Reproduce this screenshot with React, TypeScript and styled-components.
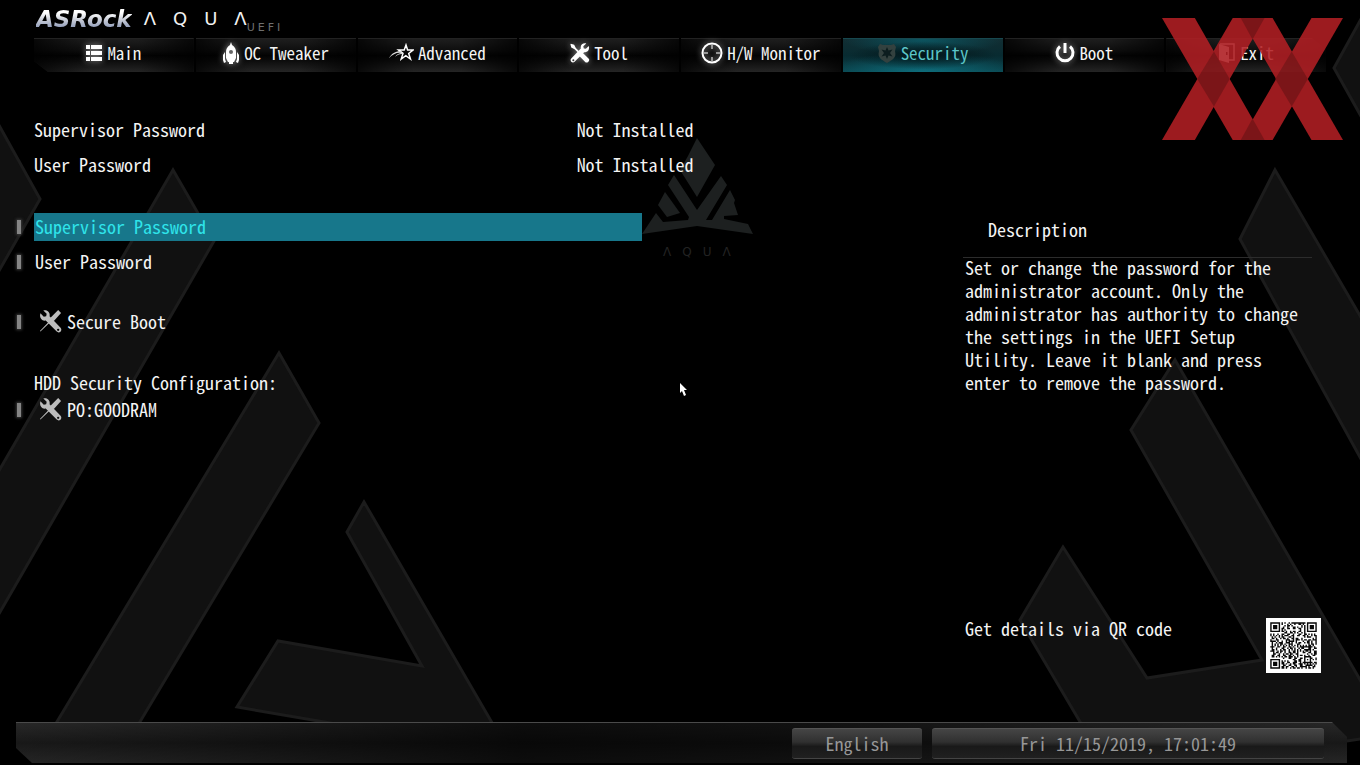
import React from "react";
import styled, { createGlobalStyle, css } from "styled-components";

const GlobalStyle = createGlobalStyle`
  *, *::before, *::after { box-sizing: border-box; }
  html, body { margin: 0; background: #000; }
  body, button {
    font-family: "Noto Sans Mono CJK JP", "Noto Sans Mono CJK SC", "Noto Sans CJK JP", "Liberation Mono", monospace;
    font-feature-settings: "hwid";
    font-size: 18px;
    line-height: 24px;
    color: #f4f4f4;
  }
`;

const Screen = styled.div`
  position: relative;
  isolation: isolate;
  display: flex;
  flex-direction: column;
  min-height: 100vh;
  overflow: hidden;
  background: #000;
`;

const Backdrop = styled.svg`
  position: absolute;
  inset: 0;
  width: 100%;
  height: 100%;
  z-index: -1;
`;

const BrandRow = styled.header`
  display: flex;
  align-items: center;
  height: 38px;
  padding: 0 36px;
`;

const BrandName = styled.span`
  font: italic bold 23px/30px "DejaVu Sans", sans-serif;
  background: linear-gradient(#ffffff 30%, #c3c8d4 55%, #8492b4 85%);
  background-clip: text;
  -webkit-background-clip: text;
  color: transparent;
`;

const Series = styled.span`
  display: flex;
  gap: 17px;
  margin-left: 12px;
  font: 400 18px/30px "DejaVu Sans", sans-serif;
  color: #f2f2f2;
`;

const Firmware = styled.span`
  display: flex;
  align-self: flex-end;
  gap: 3px;
  font: 400 11px/20px "DejaVu Sans", sans-serif;
  color: #6f6f6f;
`;

const TabBar = styled.nav`
  display: grid;
  grid-template-columns: repeat(8, 1fr);
  gap: 2px;
  margin: 0 34px;
`;

const Tab = styled.a<{ $active?: boolean; $edge?: "left" | "right" }>`
  display: flex;
  align-items: center;
  justify-content: center;
  gap: 4px;
  height: 34px;
  padding-bottom: 5px;
  border-top: 1px solid #222;
  font-size: 17px;
  color: #f4f4f4;
  text-decoration: none;
  background:
    linear-gradient(90deg, rgba(0,0,0,.75), transparent 35%, transparent 65%, rgba(0,0,0,.75)),
    linear-gradient(#1e1e1e, #0e0e0e 35%, #030303 50%, #0c0c0c 65%, #252525);
  ${p => p.$edge === "left" && css`clip-path: polygon(0 0, 100% 0, 100% 100%, 14px 100%, 0 23px);`}
  ${p => p.$edge === "right" && css`clip-path: polygon(0 0, calc(100% - 14px) 0, 100% 12px, 100% 100%, 0 100%);`}
  ${p => p.$active && css`
    border-color: #17484f;
    color: #5cc6c8;
    background:
      radial-gradient(ellipse 46% 42% at center, rgba(0,14,17,.85), transparent),
      radial-gradient(ellipse 60% 60% at 50% 100%, rgba(15,125,142,.7), transparent),
      radial-gradient(ellipse 50% 50% at 50% 0, rgba(10,95,108,.8), transparent),
      linear-gradient(#122e33, #082b31 50%, #0b454e);
  `}
`;

const Glyph = styled.svg<{ $glow?: boolean }>`
  flex: none;
  ${p => p.$glow && css`filter: drop-shadow(0 0 3px rgba(255,255,255,.55));`}
`;

const Main = styled.main`
  flex: 1;
  display: flex;
  flex-direction: column;
  padding: 40px 34px 49px 14px;
`;

const StatusList = styled.dl`
  margin: 0 0 31px;
  padding-left: 20px;
`;

const StatusRow = styled.div`
  display: grid;
  grid-template-columns: 42% 1fr;
  line-height: 35px;
  dd { margin: 0; }
`;

const Columns = styled.div`
  flex: 1;
  display: flex;
  justify-content: space-between;
`;

const Menu = styled.section`
  flex: 0 0 calc(48% - 2px);
  display: flex;
  flex-direction: column;
`;

const MenuGroup = styled.div`
  display: flex;
  flex-direction: column;
  gap: 7px;
  margin-bottom: 32px;
`;

const MenuItem = styled.button`
  display: flex;
  align-items: stretch;
  height: 28px;
  padding: 0;
  border: 0;
  background: none;
  text-align: left;
  cursor: default;
`;

const Marker = styled.span`
  display: flex;
  align-items: center;
  flex: 0 0 20px;
  &::before {
    content: "";
    width: 4px;
    height: 14px;
    margin-left: 3px;
    background: #858585;
    box-shadow: 0 0 3px 1px #3c3c3c;
  }
`;

const Label = styled.span<{ $selected?: boolean; $icon?: boolean }>`
  flex: 1;
  display: flex;
  align-items: center;
  gap: 5px;
  padding: 0 0 2px ${p => (p.$icon ? 5 : 1)}px;
  color: ${p => (p.$selected ? "#2fe4ea" : "#f4f4f4")};
  background: ${p => (p.$selected ? "#17778b" : "transparent")};
`;

const GroupTitle = styled.h2`
  margin: 0;
  padding-left: 20px;
  font-size: 18px;
  font-weight: 400;
  line-height: 28px;
`;

const DriveGroup = styled.div`
  display: flex;
  flex-direction: column;
`;

const Aside = styled.aside`
  flex: 0 0 363px;
  display: flex;
  flex-direction: column;
`;

const AsideTitle = styled.h2`
  margin: 0 14px 0 0;
  padding: 4px 25px 16px;
  border-bottom: 1px solid #2c2c2c;
  font-size: 18px;
  font-weight: 400;
  line-height: 24px;
`;

const Description = styled.p`
  margin: -2px 0 0;
  padding: 0 16px 0 2px;
  line-height: 23px;
`;

const QrRow = styled.div`
  display: flex;
  justify-content: space-between;
  margin: auto 5px 0 2px;
  line-height: 20px;
`;

const QrImage = styled.svg`
  display: block;
  width: 55px;
  height: 55px;
`;

const Footer = styled.footer`
  display: flex;
  justify-content: flex-end;
  gap: 10px;
  height: 41px;
  margin: 0 13px 2px 16px;
  padding: 5px 23px 4px;
  border-top: 1px solid #4a4a4a;
  background:
    linear-gradient(90deg, rgba(0,0,0,.1), rgba(0,0,0,.7) 38%, rgba(0,0,0,.6) 60%, rgba(0,0,0,.1)),
    linear-gradient(#2c2c2c, #1b1b1b 50%, #2a2a2a);
  clip-path: polygon(0 0, calc(100% - 15px) 0, 100% 15px, 100% 100%, 16px 100%, 0 26px);
`;

const panel = css`
  border: 0;
  border-top: 1px solid #555;
  border-bottom: 1px solid #444;
  border-radius: 3px;
  background: linear-gradient(#454545, #303030 45%, #191919 60%, #202020);
  color: #979797;
  line-height: 28px;
  text-align: center;
`;

const LanguageButton = styled.button`
  ${panel}
  width: 130px;
  padding: 0 0 2px;
`;

const Clock = styled.time`
  ${panel}
  flex: 0 0 392px;
`;

const Watermark = styled.svg`
  position: absolute;
  top: 18px;
  right: 17px;
  width: 181px;
  height: 122px;
  opacity: 0.88;
  pointer-events: none;
`;

const Pointer = styled.svg`
  position: absolute;
  left: 50%;
  top: 50%;
  pointer-events: none;
`;

const Caption = styled.div`
  position: absolute;
  left: 50%;
  top: 244px;
  display: flex;
  gap: 11px;
  margin-left: -17px;
  font: 400 12px/16px "DejaVu Sans", sans-serif;
  color: #232323;
`;

function ListMark() {
  return (
    <Glyph $glow width="17" height="16" viewBox="0 0 17 16" fill="#fff" aria-hidden>
      <path d="M0 0h4v4H0zM5 0h11v4H5zM0 6h4v4H0zM5 6h11v4H5zM0 12h4v4H0zM5 12h11v4H5z" />
    </Glyph>
  );
}

function Rocket() {
  return (
    <Glyph $glow width="18" height="22" viewBox="0 0 18 22" fill="#fff" aria-hidden>
      <path fillRule="evenodd" d="M9 0l1 3c3 2 4 4 4 7v6l-2 4H6l-2-4v-6c0-3 1-5 4-7zM9 8a2 2 0 100 4 2 2 0 000-4z" />
      <path d="M3 10v7l1 3-2 1-1-3v-5zM15 10v7l-1 3 2 1 1-3v-5z" />
      <path d="M7 20h4v2H7z" />
    </Glyph>
  );
}

function ShootingStar() {
  return (
    <Glyph width="25" height="20" viewBox="0 0 25 20" fill="none" stroke="#fff" aria-hidden>
      <path strokeWidth="1.5" d="M17 2l1.6 5H24l-4.3 3.5 1.8 5.5-4.7-3.3-4.6 3.3 1.8-5.6L9.500 7h5.700z" />
      <path fill="#ddd" stroke="none" d="M0 15c3-5 7-7 12-7l1 2C8 9 4 11 0 15zM6 14c2-3 4-4 7-4v1c-3 0-5 1-7 3z" />
    </Glyph>
  );
}

function CrossedTools({ color, flip, glow }: { color: string; flip?: boolean; glow?: boolean }) {
  return (
    <Glyph $glow={glow} width={flip ? 23 : 20} height={flip ? 23 : 20} viewBox="0 0 24 24" aria-hidden>
      <g transform={flip ? "matrix(-1 0 0 1 24 0)" : undefined} fill={color}>
        {flip ? (
          <path d="M1 3l3-3 8 8-.5 2 11.500 12-.5.5-12-11.500-2 .5z" />
        ) : (
          <path d="M1 1l4 1 2 4 6 6-1.500 1.500-6-6-4-2-1-4zM11.500 13.500l2-2 2 .5 7 7c2 2-2 6-4 4l-7-7z" />
        )}
        <path
          fillRule="evenodd"
          d="M22.500 3.500l-3.500 3.500-2.500-.5-.5-2.500L19.500.5C16-.5 12 2 13 6.500l-11.500 12c-2.500 3 1.500 6.500 4 4L17 11c4 1 7-3 5.500-7.500zM4 19.500a1.200 1.200 0 110 2.400 1.200 1.200 0 010-2.400z"
        />
      </g>
    </Glyph>
  );
}

function Crosshair() {
  return (
    <Glyph $glow width="22" height="22" viewBox="0 0 22 22" fill="none" stroke="#fff" aria-hidden>
      <circle cx="11" cy="11" r="9.500" strokeWidth="2" />
      <path stroke="#bbb" strokeWidth="1.500" d="M11 2v5M11 15v5M2 11h5M15 11h5" />
    </Glyph>
  );
}

function Badge() {
  return (
    <Glyph width="20" height="20" viewBox="0 0 20 20" aria-hidden>
      <path fill="#33413f" d="M3 1l3 1h8l3-1 2 3-1 4c2 7-3 9-8 12C5 17 0 15 2 8L1 4z" />
      <path fill="#0c1d1f" d="M10 4l1.500 3.500 4-1-2.500 3.500 2.500 3.500-4-1L10 16l-1.500-3.500-4 1L7 10 4.500 6.500l4 1z" />
    </Glyph>
  );
}

function PowerMark() {
  return (
    <Glyph $glow width="20" height="20" viewBox="0 0 20 20" fill="none" stroke="#fff" strokeWidth="3" aria-hidden>
      <path d="M5 3.500a8 8 0 1010 0M10 0v10" />
    </Glyph>
  );
}

function Door() {
  return (
    <Glyph width="18" height="20" viewBox="0 0 18 20" aria-hidden>
      <path fill="none" stroke="#ddd" strokeWidth="1.500" d="M2 1h14v16h-5" />
      <path fill="#ddd" fillRule="evenodd" d="M1 1l10 3v16L1 17zM8 9v3h1.500V9z" />
    </Glyph>
  );
}

const MODULES = 33;

function inFinder(x: number, y: number) {
  return (x < 8 && y < 8) || (x > 24 && y < 8) || (x < 8 && y > 24);
}

function qrPath() {
  let d = "";
  let seed = 7351;
  for (let y = 0; y < MODULES; y++) {
    for (let x = 0; x < MODULES; x++) {
      seed = (seed * 1103515245 + 12345) % 2147483648;
      const align = Math.max(Math.abs(x - 26), Math.abs(y - 26));
      const dark = align < 3 ? align !== 1 : (seed >> 12) % 2 === 0;
      if (dark && !inFinder(x, y)) d += `M${x} ${y}h1v1h-1z`;
    }
  }
  return d;
}

function QrCode() {
  return (
    <QrImage viewBox="-3 -3 39 39" role="img" aria-label="QR code">
      <path fill="#fff" d="M-3-3h39v39h-39z" />
      <path fill="#080808" d={qrPath()} />
      {[[0, 0], [26, 0], [0, 26]].map(([x, y]) => (
        <path
          key={`${x}-${y}`}
          fill="#080808"
          fillRule="evenodd"
          d={`M${x} ${y}h7v7h-7zM${x + 1} ${y + 1}v5h5v-5zM${x + 2} ${y + 2}h3v3h-3z`}
        />
      ))}
    </QrImage>
  );
}

function Scenery() {
  return (
    <Backdrop viewBox="0 0 1360 765" preserveAspectRatio="xMidYMid slice" aria-hidden>
      <g fill="#111" stroke="#1c1c1c" strokeWidth="3">
        <path d="M-4 120L40 199-4 276z" />
        <path d="M173 170L214 241-4 619V476z" />
        <path d="M279 353L319 423 129 740H46z" />
        <path d="M364 502L502 740H430L237 707 278 641 422 666 347 532z" />
        <path d="M1366 10L1334 68 1366 125z" />
        <path d="M1275 170L1366 326V468L1240 239z" />
        <path d="M1175 360L1366 690V738L1340 742H1092L1020 620 1063 547 1147 678 1262 660 1131 430z" />
      </g>
      <g transform="translate(640 135)" fill="#1d2020">
        <path d="M57 3L75 30 57 62 40 35 48 21z" />
        <path d="M34 40L57 75 81 41 87 50 66 85H72L90 55 95 65 94 68 98 80 84 81V84L108 89 113 99 57 91 2 99 16 78 23 87 48 85 49 82 28 50z" />
        <path d="M25 57L40 78 27 82 18 70z" />
      </g>
    </Backdrop>
  );
}

const tabs: { name: string; icon: React.ReactNode; active?: boolean }[] = [
  { name: "Main", icon: <ListMark /> },
  { name: "OC Tweaker", icon: <Rocket /> },
  { name: "Advanced", icon: <ShootingStar /> },
  { name: "Tool", icon: <CrossedTools color="#fff" glow /> },
  { name: "H/W Monitor", icon: <Crosshair /> },
  { name: "Security", icon: <Badge />, active: true },
  { name: "Boot", icon: <PowerMark /> },
  { name: "Exit", icon: <Door /> },
];

export default function App() {
  return (
    <Screen>
      <GlobalStyle />
      <Scenery />
      <Caption aria-hidden>
        <span>Λ</span><span>Q</span><span>U</span><span>Λ</span>
      </Caption>
      <BrandRow>
        <BrandName>ASRock</BrandName>
        <Series><span>Λ</span><span>Q</span><span>U</span><span>Λ</span></Series>
        <Firmware><span>U</span><span>E</span><span>F</span><span>I</span></Firmware>
      </BrandRow>
      <TabBar>
        {tabs.map((tab, i) => (
          <Tab
            key={tab.name}
            href="#"
            $active={tab.active}
            $edge={i === 0 ? "left" : i === tabs.length - 1 ? "right" : undefined}
            aria-current={tab.active ? "page" : undefined}
          >
            {tab.icon}
            {tab.name}
          </Tab>
        ))}
      </TabBar>
      <Main>
        <StatusList>
          <StatusRow><dt>Supervisor Password</dt><dd>Not Installed</dd></StatusRow>
          <StatusRow><dt>User Password</dt><dd>Not Installed</dd></StatusRow>
        </StatusList>
        <Columns>
          <Menu>
            <MenuGroup>
              <MenuItem><Marker /><Label $selected>Supervisor Password</Label></MenuItem>
              <MenuItem><Marker /><Label>User Password</Label></MenuItem>
            </MenuGroup>
            <MenuGroup>
              <MenuItem><Marker /><Label $icon><CrossedTools color="#bdbdbd" flip />Secure Boot</Label></MenuItem>
            </MenuGroup>
            <DriveGroup>
              <GroupTitle>HDD Security Configuration:</GroupTitle>
              <MenuItem><Marker /><Label $icon><CrossedTools color="#bdbdbd" flip />PO:GOODRAM</Label></MenuItem>
            </DriveGroup>
          </Menu>
          <Aside>
            <AsideTitle>Description</AsideTitle>
            <Description>
              Set or change the password for the administrator account. Only the administrator has
              authority to change the settings in the UEFI Setup Utility. Leave it blank and press
              enter to remove the password.
            </Description>
            <QrRow>
              <span>Get details via QR code</span>
              <QrCode />
            </QrRow>
          </Aside>
        </Columns>
      </Main>
      <Footer>
        <LanguageButton>English</LanguageButton>
        <Clock dateTime="2019-11-15T17:01:49">Fri 11/15/2019, 17:01:49</Clock>
      </Footer>
      <Watermark viewBox="0 0 540 364" preserveAspectRatio="none" aria-hidden>
        <g fill="#b21f24">
          <path d="M0 0H98L306 364H211z" />
          <path d="M211 0H306L98 364H0z" />
          <path d="M235 0H330L540 364H446z" />
          <path d="M446 0H540L330 364H235z" />
        </g>
        <g fill="#8d191c">
          <path d="M155 100L202 182 155 264 105 182z" />
          <path d="M387 100L435 182 387 264 338 182z" />
          <path d="M235 0H306L270 64z" />
          <path d="M235 364H306L270 300z" />
        </g>
      </Watermark>
      <Pointer width="8" height="14" viewBox="0 0 8 14" fill="#fff" aria-hidden>
        <path d="M0 0L7 7H4L6 12 4 13 2 8 0 10z" />
      </Pointer>
    </Screen>
  );
}
